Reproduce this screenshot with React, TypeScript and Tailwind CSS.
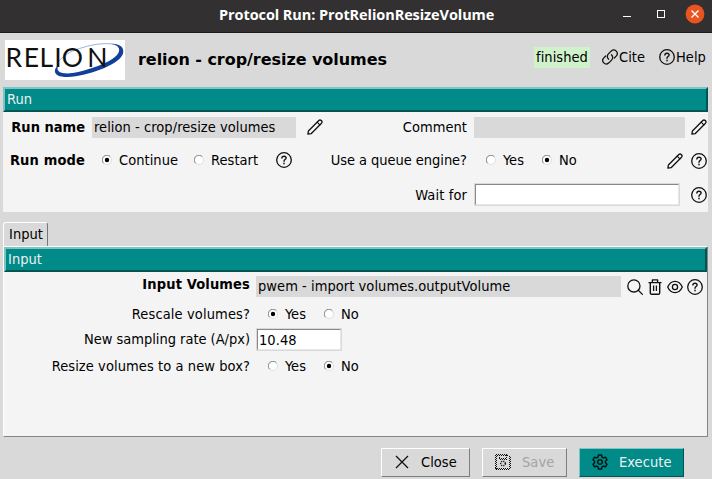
import React from "react";

type IconProps = { className?: string };

const stroke = {
  width: 16,
  height: 16,
  viewBox: "0 0 16 16",
  fill: "none",
  stroke: "#111",
  strokeWidth: 1.3,
  strokeLinecap: "round" as const,
  strokeLinejoin: "round" as const,
};

function Help({ className = "" }: IconProps) {
  return (
    <svg {...stroke} className={`shrink-0 ${className}`}>
      <circle cx="8" cy="8" r="7.3" />
      <path d="M5.9 6.1C5.9 4.8 6.8 4.2 8 4.2s2.1.7 2.1 1.8c0 1.5-2.1 1.6-2.1 3.2" strokeWidth="1.4" />
      <path d="M8 11.3v.5" strokeWidth="1.5" />
    </svg>
  );
}

function Pencil({ className = "" }: IconProps) {
  return (
    <svg {...stroke} className={`shrink-0 ${className}`}>
      <path d="M.9 15.200l.5-3.200L11.800 1.500q1.200-1.100 2.400 0l.3.300q1.100 1.200 0 2.400L4.100 14.700z" />
      <path d="M10.200 3.200l2.600 2.600" strokeWidth="1.200" />
    </svg>
  );
}

function LinkIcon({ className = "" }: IconProps) {
  return (
    <svg {...stroke} className={`shrink-0 ${className}`}>
      <path d="M6.6 10.200a3.600 3.600 0 0 1-.2-5.300l3-3a3.550 3.550 0 0 1 5 5L12.300 9" />
      <path d="M9.400 5.800a3.600 3.600 0 0 1 .2 5.300l-3 3a3.550 3.550 0 0 1-5-5L3.700 7" />
    </svg>
  );
}

function Search({ className = "" }: IconProps) {
  return (
    <svg {...stroke} className={`shrink-0 ${className}`}>
      <circle cx="6.9" cy="6.9" r="6.1" />
      <path d="M11.3 11.3l4.1 4.1" />
    </svg>
  );
}

function Trash({ className = "" }: IconProps) {
  return (
    <svg {...stroke} className={`shrink-0 ${className}`} strokeLinecap="butt">
      <path d="M1.5 3.6h13M3.3 3.6v10.3q0 1.4 1.4 1.4h6.6q1.4 0 1.4-1.4V3.600M5.400 3.400V.9h5.200v2.500" strokeWidth="1.4" />
      <path d="M6.600 6.500v5.400M9.400 6.500v5.400" strokeWidth="1.3" />
    </svg>
  );
}

function Eye({ className = "" }: IconProps) {
  return (
    <svg {...stroke} className={`shrink-0 ${className}`}>
      <path d="M.7 8C2.200 4.600 4.900 2.300 8 2.300S13.800 4.600 15.300 8c-1.500 3.400-4.200 5.600-7.300 5.600S2.200 11.400.7 8z" />
      <circle cx="8" cy="8" r="2.600" />
    </svg>
  );
}

function Gear({ className = "" }: IconProps) {
  return (
    <svg {...stroke} className={`shrink-0 ${className}`} stroke="#001a18" strokeWidth="1.5">
      <path d="M6.500 1h3l.5 2.100 1.400.8 2.100-.7 1.500 2.600-1.600 1.500v1.400l1.600 1.500-1.500 2.600-2.100-.7-1.400.8-.5 2.100h-3L6 12.900l-1.400-.8-2.100.7L1 10.200l1.600-1.500V7.300L1 5.800l1.500-2.600 2.100.7L6 3.100z" />
      <circle cx="8" cy="8" r="2.300" />
    </svg>
  );
}

function Floppy({ className = "" }: IconProps) {
  return (
    <svg {...stroke} className={`shrink-0 ${className}`} strokeLinecap="butt" strokeDasharray="1 1">
      <path d="M1 .5h12M0 1.500h14M.5 1v14M1.500 2v13M15.500 3v12M14.500 2v13M1 15.500h14M0 14.500h15" strokeWidth="1" />
      <path d="M4.500 1v4M11.500 1v4M4 4.500h8M5 5.500h7" strokeWidth="1" />
      <circle cx="8" cy="9.500" r="2.300" strokeWidth="1.500" />
    </svg>
  );
}

function Radio({ on = false, className = "" }: { on?: boolean; className?: string }) {
  return (
    <svg width="10" height="10" viewBox="0 0 10 10" className={`shrink-0 ${className}`}>
      <circle cx="5" cy="5" r="4.500" fill="#fff" stroke="#dedede" />
      <path d="M1.600 8.300A4.500 4.500 0 0 1 8.300 1.600" fill="none" stroke="#888" />
      {on && <circle cx="5" cy="5" r="2.200" fill="#000" />}
    </svg>
  );
}

function Logo() {
  return (
    <svg width="120" height="40" viewBox="0 0 120 40" className="shrink-0 bg-white">
      <path d="M53 22C60 14 68 10 78 7.500 90 3.500 104 2.500 112 5" fill="none" stroke="#9fb3dc" strokeWidth="1" />
      <path
        d="M106 3.800C116 4 119.500 8 118 13.500 116 21 100 29 85 33 70 37.500 58 38 53 35.500 48.500 33 49 28.500 54 24.500 51 29 52.500 32.500 59 33.300 68 34 76 31.500 83 29.300 96 25.500 107 20.500 112 15 116 10.500 115 5.500 106 3.800z"
        fill="#123f99"
      />
      <text x="0.500 18.800 34.500 49.200 56.800 82.300" y="26.700" fill="#111" className="font-['Lato',sans-serif] text-[26.500px]">
        RELION
      </text>
    </svg>
  );
}

const bar =
  "flex h-[25px] shrink-0 items-center border-2 border-t-[#7fc4c3] border-l-[#7fc4c3] border-r-[#005452] border-b-[#005452] bg-[#008b89] pb-[2px] pl-[2px] text-[#f0f0f0]";

function App() {
  return (
    <div className="flex h-[479px] w-[712px] flex-col overflow-hidden whitespace-nowrap bg-[#d9d9d9] font-['DejaVu_Sans_Condensed','DejaVu_Sans',sans-serif] text-[14.500px] leading-[20px] tracking-[0.050px] text-black">
      <header className="flex h-[33px] shrink-0 border-b border-[#1c1b1b] bg-[#323031] font-['Open_Sans',sans-serif] text-[14.500px] font-bold tracking-[-0.080px] text-white">
        <div className="ml-[219px] w-[403px] pt-[5px]">Protocol Run: ProtRelionResizeVolume</div>
        <svg width="90" height="32" viewBox="0 0 90 32">
          <path d="M1 16.500h8" stroke="#fff" />
          <rect x="35.500" y="10.500" width="7" height="7" fill="none" stroke="#fff" />
          <circle cx="73" cy="14" r="9.400" fill="#e95420" />
          <path d="M69.500 10.500l7 7M76.500 10.500l-7 7" stroke="#fff" strokeWidth="1.400" />
        </svg>
      </header>

      <section className="flex h-[54px] shrink-0 pl-[5px] pt-[7px]">
        <Logo />
        <h1 className="ml-[13px] w-[396px] pt-[10px] font-['DejaVu_Sans',sans-serif] text-[16px] font-bold tracking-[-0.050px]">relion - crop/resize volumes</h1>
        <span className="mt-[7px] h-[21px] w-[56px] bg-[#d0f2cb] pl-[2px]">finished</span>
        <LinkIcon className="ml-[12px] mt-[9px]" />
        <span className="ml-px mt-[7px] w-[40px]">Cite</span>
        <Help className="mt-[9px]" />
        <span className="ml-px mt-[7px]">Help</span>
      </section>

      <section className="ml-[3px] flex h-[125px] w-[705px] shrink-0 flex-col bg-[#f4f4f4]">
        <div className={bar}>Run</div>
        <div className="flex h-[31px] items-center">
          <b className="mb-[2px] w-[82px] text-right tracking-normal">Run name</b>
          <div className="mb-px ml-[7px] h-[21px] w-[204px] bg-[#d9d9d9] pl-[2px]">relion - crop/resize volumes</div>
          <Pencil className="mb-px ml-[11px]" />
          <span className="mb-[2px] w-[144px] text-right">Comment</span>
          <div className="mb-px ml-[7px] h-[21px] w-[211px] bg-[#d9d9d9]" />
          <Pencil className="mb-px ml-[6px]" />
        </div>
        <div className="flex h-[34px] items-center">
          <b className="w-[82px] text-right tracking-[0.150px]">Run mode</b>
          <Radio on className="ml-[17px]" />
          <span className="ml-[7px] w-[75px]">Continue</span>
          <Radio />
          <span className="ml-[7px] w-[65px]">Restart</span>
          <Help />
          <span className="w-[175px] text-right tracking-[-0.040px]">Use a queue engine?</span>
          <Radio className="ml-[19px]" />
          <span className="ml-[7px] w-[39px]">Yes</span>
          <Radio on />
          <span className="ml-[7px] w-[108px]">No</span>
          <Pencil className="mt-[2px]" />
          <Help className="ml-[8px] mt-[2px]" />
        </div>
        <div className="flex h-[35px] items-center">
          <span className="w-[464px] text-right tracking-[0.120px]">Wait for</span>
          <div className="ml-[7px] h-[23px] w-[206px] border border-[#d9d9d9]">
            <div className="h-full border border-t-[#888] border-l-[#888] border-r-[#e8e8e8] border-b-[#e8e8e8] bg-white" />
          </div>
          <Help className="ml-[11px]" />
        </div>
      </section>

      <div className="ml-[3px] mt-[10px] h-[24px] w-[45px] shrink-0 rounded-t-[3px] border border-b-0 border-t-white border-l-white border-r-[#777] pl-[5px] pt-px">
        Input
      </div>

      <section className="ml-[3px] flex h-[191px] w-[705px] shrink-0 flex-col border border-t-white border-l-white border-r-[#858585] border-b-[#858585] bg-[#f4f4f4]">
        <div className={bar}>Input</div>
        <div className="flex h-[29px] items-center">
          <b className="mb-[5px] w-[246px] text-right tracking-[0.150px]">Input Volumes</b>
          <div className="ml-[6px] h-[21px] w-[365px] bg-[#d9d9d9] pl-[2px]">pwem - import volumes.outputVolume</div>
          <Search className="ml-[6px]" />
          <Trash className="ml-[4px]" />
          <Eye className="ml-[4px]" />
          <Help className="ml-[4px]" />
        </div>
        <div className="flex h-[25px] items-center">
          <span className="w-[246px] text-right tracking-[0.120px]">Rescale volumes?</span>
          <Radio on className="ml-[18px]" />
          <span className="ml-[7px] w-[39px]">Yes</span>
          <Radio />
          <span className="ml-[7px]">No</span>
        </div>
        <div className="flex h-[27px] items-center">
          <span className="mb-[2px] w-[246px] text-right tracking-[-0.020px]">New sampling rate (A/px)</span>
          <div className="ml-[6px] h-[23px] w-[86px] border border-[#d9d9d9]">
            <div className="h-full border border-t-[#888] border-l-[#888] border-r-[#e8e8e8] border-b-[#e8e8e8] bg-white pl-[1px]">10.48</div>
          </div>
        </div>
        <div className="flex h-[26px] items-center">
          <span className="w-[246px] text-right tracking-[0.080px]">Resize volumes to a new box?</span>
          <Radio className="ml-[18px]" />
          <span className="ml-[7px] w-[39px]">Yes</span>
          <Radio on />
          <span className="ml-[7px]">No</span>
        </div>
      </section>

      <footer className="ml-[381px] mt-[11px] flex h-[29px] shrink-0">
        <button className="flex w-[89px] items-center border border-t-white border-l-white border-r-[#7d7d7d] border-b-[#7d7d7d] pb-[2px] pl-[12px]">
          <svg width="16" height="16" viewBox="0 0 16 16">
            <path d="M2 2l12 12M14 2L2 14" stroke="#111" strokeWidth="1.300" />
          </svg>
          <span className="ml-[11px]">Close</span>
        </button>
        <button className="ml-[12px] flex w-[85px] items-center border border-t-white border-l-white border-r-[#7d7d7d] border-b-[#7d7d7d] pb-[2px] pl-[12px] text-[#a3a3a3]">
          <Floppy />
          <span className="ml-[11px]">Save</span>
        </button>
        <button className="ml-[12px] flex w-[105px] items-center border border-t-[#7fc4c3] border-l-[#7fc4c3] border-r-[#005452] border-b-[#005452] bg-[#008b89] pb-[2px] pl-[12px] text-[#f0f0f0]">
          <Gear />
          <span className="ml-[11px]">Execute</span>
        </button>
      </footer>
    </div>
  );
}

export default App;
